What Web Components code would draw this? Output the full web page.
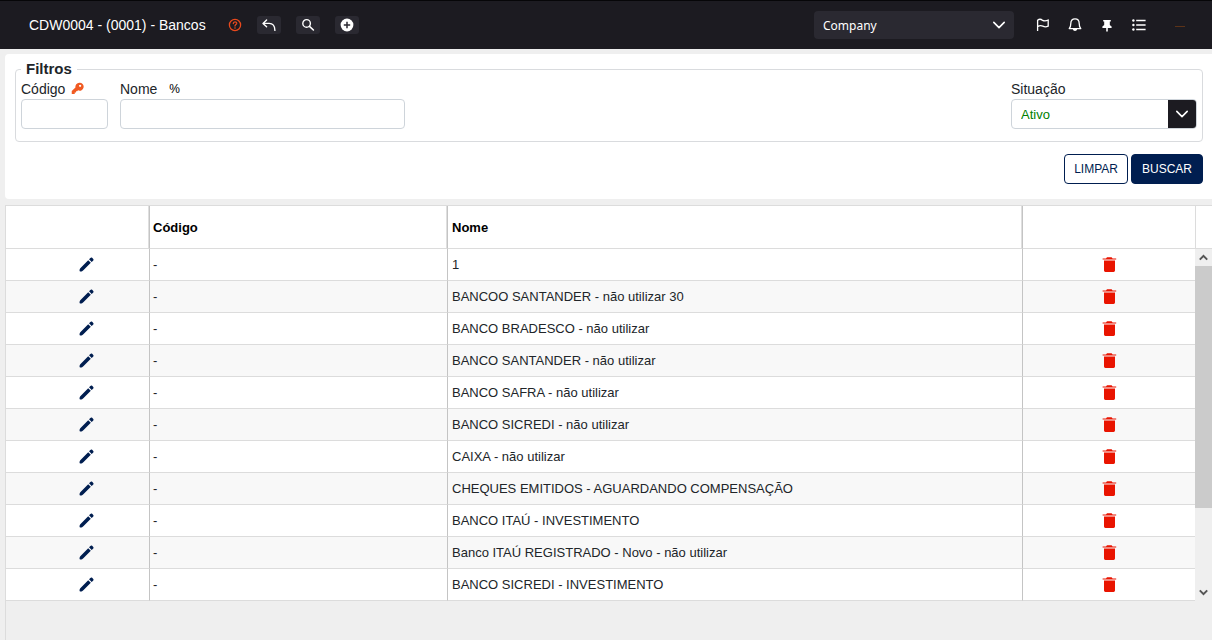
<!DOCTYPE html>
<html lang="pt-BR">
<head>
<meta charset="utf-8">
<title>CDW0004 - (0001) - Bancos</title>
<style>
  html, body { margin: 0; }
  body { background: #efefef; color: #212529; font-family: "Liberation Sans", Arial, sans-serif; font-size: 14px; }
</style>
</head>
<body>
<bancos-app></bancos-app>

<template id="tpl-app">
  <style>
    :host { display: flex; flex-direction: column; min-height: 100vh; }
    main { flex: 1; display: flex; flex-direction: column; gap: 6px; padding: 5px 0 0 5px; }
    data-grid { flex: 1; }
  </style>
  <top-bar>CDW0004 - (0001) - Bancos</top-bar>
  <main>
    <filter-panel></filter-panel>
    <data-grid></data-grid>
  </main>
</template>

<template id="tpl-bar">
  <style>
    :host { display: block; }
    header { box-sizing: border-box; height: 49px; border-top: 1px solid #060608; background: #1c1b21; color: #fff;
      display: flex; align-items: center; justify-content: space-between; padding: 0 27px 0 29px; }
    h1 { margin: 0; font-size: 14px; line-height: 20px; font-weight: normal; white-space: nowrap; }
    .left, .tools, .right, .links { display: flex; align-items: center; }
    .left { gap: 22px; }
    .tools { gap: 15px; }
    .right { gap: 21px; }
    .links { gap: 16px; }
    button { border: 0; padding: 0; margin: 0; background: none; color: inherit; display: flex; align-items: center; justify-content: center; }
    .tools button { width: 24px; height: 18px; border-radius: 3px; background: #2a2931; }
    .tools .help { width: 14px; background: none; color: #e8491d; }
    .dash { width: 10px; height: 1px; margin: 2px 0 0 12px; background: #5c3318; }
  </style>
  <header>
    <div class="left">
      <h1><slot></slot></h1>
      <div class="tools">
        <button class="help" aria-label="Ajuda"><app-icon name="help" size="14"></app-icon></button>
        <button aria-label="Voltar"><app-icon name="back" size="14"></app-icon></button>
        <button aria-label="Pesquisar"><app-icon name="search" size="14"></app-icon></button>
        <button aria-label="Novo"><app-icon name="plus" size="14"></app-icon></button>
      </div>
    </div>
    <div class="right">
      <drop-down label="Empresa" option="Company" theme="dark"></drop-down>
      <div class="links">
        <button aria-label="Favoritos"><app-icon name="flag" size="16"></app-icon></button>
        <button aria-label="Avisos"><app-icon name="bell" size="16"></app-icon></button>
        <button aria-label="Fixar"><app-icon name="pin" size="16"></app-icon></button>
        <button aria-label="Menu"><app-icon name="list" size="16"></app-icon></button>
        <span class="dash"></span>
      </div>
    </div>
  </header>
</template>

<template id="tpl-drop">
  <style>
    :host { display: block; }
    .box { display: grid; box-sizing: border-box; height: 30px; border: 1px solid #ced4da; border-radius: 4px; overflow: hidden; background: #fff; }
    select, .arrow { grid-area: 1 / 1; }
    select { appearance: none; margin: 0; border: 0; outline: 0; width: 100%; background: none; padding: 1px 36px 0 9px; font: 13px "Liberation Sans", Arial, sans-serif; color: #008000; }
    .arrow { justify-self: end; width: 28px; display: flex; align-items: center; justify-content: center; background: #1c1b21; color: #fff; pointer-events: none; }
    :host([theme=dark]) .box { width: 200px; height: 28px; border: 0; background: #2a2931; }
    :host([theme=dark]) select { font: 12px "Noto Sans", sans-serif; color: #fff; }
    :host([theme=dark]) option { background: #2a2931; }
    :host([theme=dark]) .arrow { width: 30px; background: none; }
  </style>
  <div class="box">
    <select><option></option></select>
    <span class="arrow"><app-icon name="chevron" size="14"></app-icon></span>
  </div>
</template>

<template id="tpl-filter">
  <style>
    :host { display: block; background: #fff; border-radius: 4px 0 0 4px; padding: 7px 9px 15px 10px; }
    fieldset { margin: 0; min-width: 0; border: 1px solid #d9dbde; border-radius: 4px; padding: 3px 5px 12px;
      display: flex; gap: 12px; align-items: flex-end; }
    legend { padding: 0 5px; font-size: 15px; line-height: 16px; font-weight: bold; }
    .field { display: flex; flex-direction: column; gap: 2px; }
    .cap { display: flex; align-items: center; height: 17px; }
    .key { color: #f05a22; margin-left: 6px; display: flex; }
    .pct { font-size: 12px; margin-left: 12px; color: #000; }
    input { box-sizing: border-box; width: 100%; height: 30px; margin: 0; border: 1px solid #ced4da; border-radius: 4px; padding: 0 8px; font: inherit; background: #fff; }
    .codigo { width: 87px; }
    .nome { width: 285px; }
    .sit { width: 186px; margin-left: auto; }
    .actions { display: flex; justify-content: flex-end; gap: 3px; margin-top: 12px; }
    .actions button { box-sizing: border-box; height: 30px; margin: 0; padding: 0 9px; border: 1px solid #001e50; border-radius: 4px; background: #fff; color: #001e50; font: 12px "Liberation Sans", Arial, sans-serif; }
    .actions .primary { background: #001e50; color: #fff; padding: 0 10px; }
  </style>
  <fieldset>
    <legend>Filtros</legend>
    <div class="field codigo">
      <div class="cap"><label for="codigo">Código</label><span class="key"><app-icon name="key" size="13"></app-icon></span></div>
      <input id="codigo" type="text">
    </div>
    <div class="field nome">
      <div class="cap"><label for="nome">Nome</label><span class="pct">%</span></div>
      <input id="nome" type="text">
    </div>
    <div class="field sit">
      <div class="cap"><span>Situação</span></div>
      <drop-down label="Situação" option="Ativo"></drop-down>
    </div>
  </fieldset>
  <div class="actions">
    <button type="button">LIMPAR</button>
    <button type="button" class="primary">BUSCAR</button>
  </div>
</template>

<template id="tpl-grid">
  <style>
    :host { display: flex; align-items: flex-start; border: solid #dcdcdc; border-width: 1px 0 0 1px; }
    table { flex: 1; min-width: 0; width: 100%; table-layout: fixed; border-collapse: separate; border-spacing: 0; font-size: 13px; background: #fff; }
    th, td { box-sizing: border-box; padding: 0 4px; border-bottom: 1px solid #dcdcdc; border-right: 1px solid #c4c4c4; text-align: left; white-space: nowrap; overflow: hidden; text-overflow: ellipsis; }
    th { height: 43px; color: #000; box-shadow: inset -1px 0 #dfdfdf; }
    td { height: 32px; }
    th:last-child, td:last-child { border-right: 0; box-shadow: none; }
    th:nth-child(2), td:nth-child(2) { padding-left: 3px; }
    tbody tr:nth-child(even) { background: #f8f8f8; }
    .edit { width: 144px; }
    .code { width: 298px; }
    .del { width: 172px; }
    td:first-child { padding: 0 0 0 18px; }
    td:last-child { padding: 0; }
    td button { display: flex; margin: 0 auto; padding: 0; border: 0; background: none; color: #001e50; }
    td:last-child button { color: #e91400; }
    .gutter { width: 17px; align-self: flex-start; display: flex; flex-direction: column; }
    .cap { box-sizing: border-box; height: 43px; background: #fff; border: solid #dcdcdc; border-width: 0 0 1px 1px; }
    .bar { height: 352px; display: flex; flex-direction: column; color: #555; }
    .bar span { height: 17px; display: flex; align-items: center; justify-content: center; }
    .bar .up { transform: rotate(180deg); }
    .track { flex: 1; }
    .thumb { height: 242px; background: #cbcbcb; }
  </style>
  <table>
    <colgroup><col class="edit"><col class="code"><col><col class="del"></colgroup>
    <thead><tr><th></th><th>Código</th><th>Nome</th><th></th></tr></thead>
    <tbody></tbody>
  </table>
  <div class="gutter">
    <div class="cap"></div>
    <div class="bar" aria-hidden="true">
      <span class="up"><app-icon name="scroll" size="9"></app-icon></span>
      <div class="track"><div class="thumb"></div></div>
      <span><app-icon name="scroll" size="9"></app-icon></span>
    </div>
  </div>
</template>

<script>
  const line = (d, w) => `<path d="${d}" fill="none" stroke="currentColor" stroke-width="${w}" stroke-linecap="round" stroke-linejoin="round"/>`;
  const ICONS = {
    help: [14, '<circle cx="7" cy="7" r="5.6" fill="none" stroke="currentColor" stroke-width="1.3"/>' + line('M5.3 5.6C5.3 3.2 8.8 3.3 8.7 5.4C8.6 6.6 7 6.6 7 8', 1.3) + '<circle cx="7" cy="10" r=".8" fill="currentColor"/>'],
    back: [14, line('M4.6 2L1 5.4L4.6 8.8M1.2 5.4H7.2C11 5.4 12.8 8 12.9 12.4', 1.4)],
    search: [14, '<circle cx="5.6" cy="5.4" r="3.8" fill="none" stroke="currentColor" stroke-width="1.4"/>' + line('M8.5 8.3L12.4 12', 1.6)],
    plus: [14, '<circle cx="7" cy="7" r="6.4" fill="currentColor"/><path d="M7 3.8V10.2M3.8 7H10.2" stroke="#2a2931" stroke-width="1.5"/>'],
    flag: [16, '<path d="M2.6 14V3.2C4.2 2 6.2 2.2 7.6 3.4C9.2 4.2 11.2 4 13.2 3.2V9.2C11.2 10.2 9.4 10 7.8 9.2C6.2 8.4 4.4 8.6 2.6 9.6" fill="none" stroke="currentColor" stroke-width="1.3"/>'],
    bell: [16, line('M2.2 11.6C3.6 10.2 3.8 8.8 3.8 6.4C3.8 3.6 5.4 1.8 8 1.8C10.6 1.8 12.2 3.6 12.2 6.4C12.2 8.8 12.4 10.2 13.8 11.6Z', 1.3) + '<path d="M5.8 12H10.2C10 14.6 6 14.6 5.8 12Z" fill="currentColor"/>'],
    pin: [16, '<path d="M4.2 3H11.8V4.6H10.8V8L12.6 9.4V11H8.8V14L8 15L7.2 14V11H3.4V9.4L5.2 8V4.6H4.2Z" fill="currentColor"/>'],
    list: [16, '<path d="M5.2 3.5H14.6M5.2 8H14.6M5.2 12.5H14.6" stroke="currentColor" stroke-width="1.5"/><g fill="currentColor"><circle cx="2.4" cy="3.5" r="1.2"/><circle cx="2.4" cy="8" r="1.2"/><circle cx="2.4" cy="12.5" r="1.2"/></g>'],
    chevron: [14, line('M1.8 4.4L7 9.6L12.2 4.4', 1.6)],
    key: [14, '<path fill="currentColor" fill-rule="evenodd" d="M8.9.8A4.3 4.3 0 1 1 7.6 9L6.6 9.9H5.4V11.3H4V12.8H.8V9.8L4.8 5.9A4.3 4.3 0 0 1 8.9.8ZM9.8 2.9A1.2 1.2 0 1 0 9.81 2.9Z"/>'],
    pencil: [16, '<path fill="currentColor" d="M9.8 3.4L12.6 6.2L4.6 14.1C3.6 15.2 2 15.8 .8 15.2C.2 14 .8 12.4 1.9 11.4ZM10.7 2.5L12.1 1C12.8.3 13.4.3 14 .8L15.2 2C15.7 2.6 15.7 3.2 15 3.9L13.5 5.3Z"/>'],
    trash: [15, '<path fill="currentColor" d="M.6 1.4H4L5 .2H9.6L10.6 1.4H14.2V2.6H.6ZM2 3.4H13V13.6Q13 15 11.6 15H3.4Q2 15 2 13.6Z"/>'],
    scroll: [9, '<path d="M.8 2.4L4.5 6.1L8.2 2.4" fill="none" stroke="currentColor" stroke-width="2"/>']
  };

  class Base extends HTMLElement {
    constructor() {
      super();
      const root = this.attachShadow({ mode: 'open' });
      const tpl = this.constructor.template;
      if (tpl) root.append(document.getElementById(tpl).content.cloneNode(true));
    }
  }

  customElements.define('app-icon', class extends Base {
    connectedCallback() {
      const size = this.getAttribute('size');
      const [box, body] = ICONS[this.getAttribute('name')];
      this.shadowRoot.innerHTML = `<style>:host{display:block}svg{display:block}</style>
        <svg width="${size}" height="${size}" viewBox="0 0 ${box} ${box}" aria-hidden="true">${body}</svg>`;
    }
  });

  customElements.define('drop-down', class extends Base {
    static template = 'tpl-drop';
    connectedCallback() {
      this.shadowRoot.querySelector('select').setAttribute('aria-label', this.getAttribute('label'));
      this.shadowRoot.querySelector('option').textContent = this.getAttribute('option');
    }
  });

  customElements.define('top-bar', class extends Base { static template = 'tpl-bar'; });
  customElements.define('filter-panel', class extends Base { static template = 'tpl-filter'; });

  const BANCOS = [
    '1',
    'BANCOO SANTANDER - não utilizar 30',
    'BANCO BRADESCO - não utilizar',
    'BANCO SANTANDER - não utilizar',
    'BANCO SAFRA - não utilizar',
    'BANCO SICREDI - não utilizar',
    'CAIXA - não utilizar',
    'CHEQUES EMITIDOS - AGUARDANDO COMPENSAÇÃO',
    'BANCO ITAÚ - INVESTIMENTO',
    'Banco ITAÚ REGISTRADO - Novo - não utilizar',
    'BANCO SICREDI - INVESTIMENTO'
  ];

  customElements.define('data-grid', class extends Base {
    static template = 'tpl-grid';
    connectedCallback() {
      this.shadowRoot.querySelector('tbody').innerHTML = BANCOS.map(nome => `<tr>
        <td><button type="button" aria-label="Editar"><app-icon name="pencil" size="15"></app-icon></button></td>
        <td>-</td><td>${nome}</td>
        <td><button type="button" aria-label="Excluir"><app-icon name="trash" size="15"></app-icon></button></td></tr>`).join('');
    }
  });

  customElements.define('bancos-app', class extends Base { static template = 'tpl-app'; });
</script>
</body>
</html>
